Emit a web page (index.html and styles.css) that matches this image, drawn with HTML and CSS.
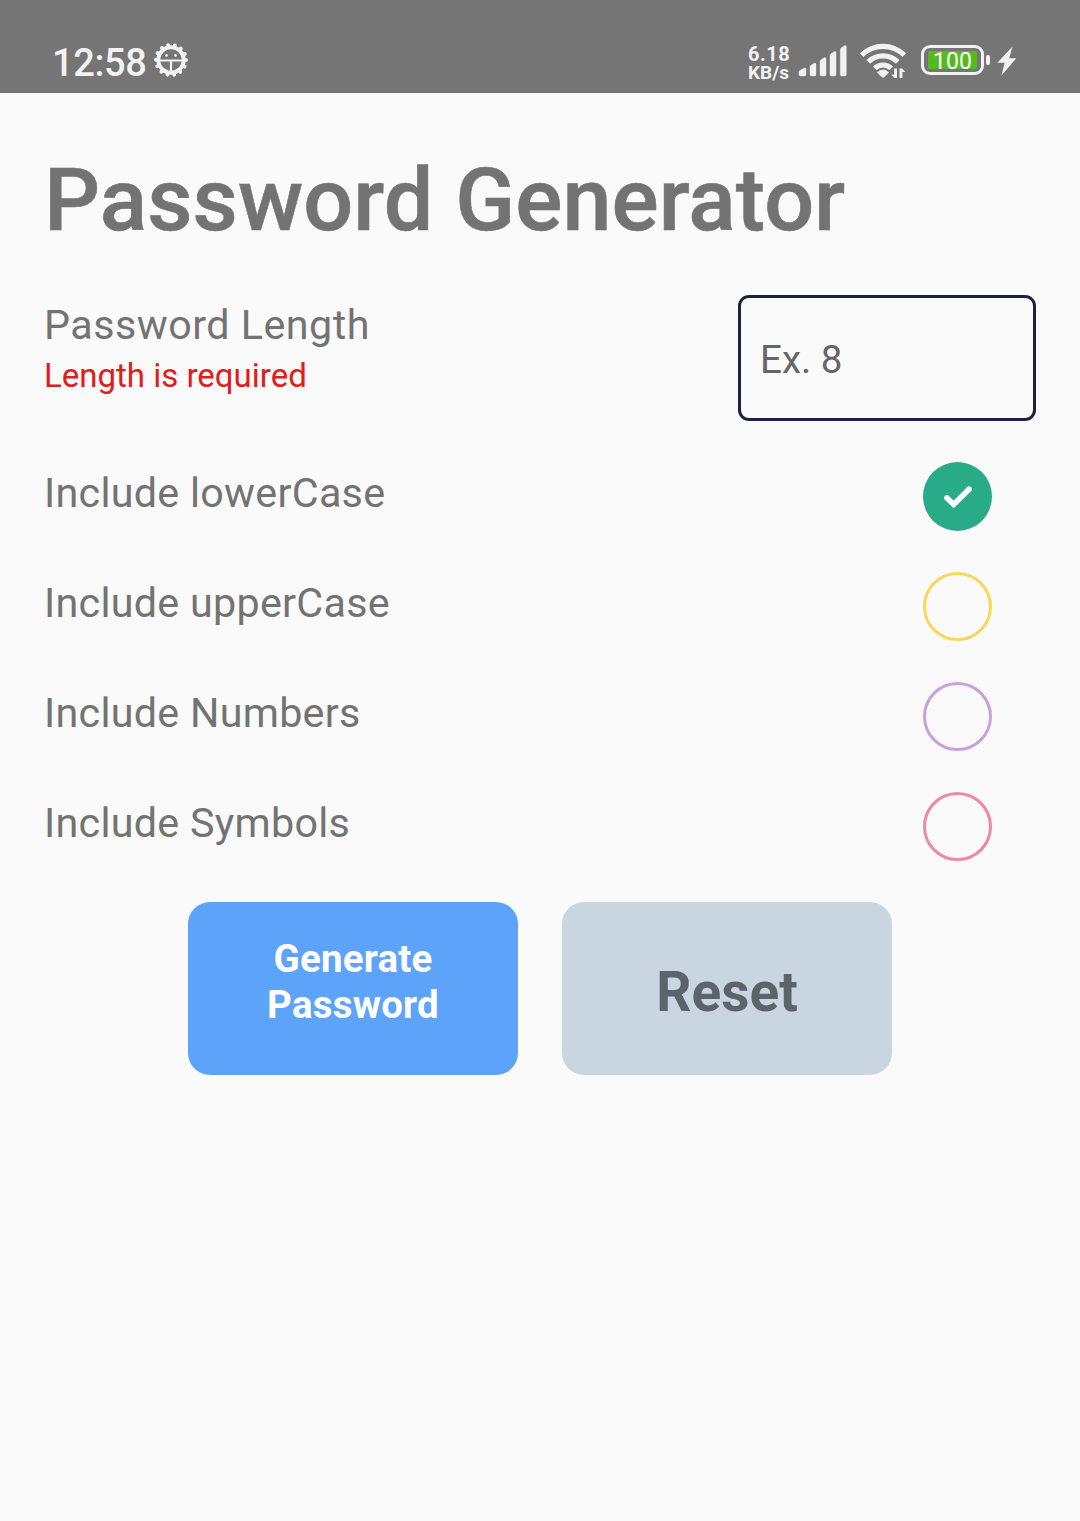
FILE: index.html
```html
<!DOCTYPE html>
<html lang="en">
<head>
<meta charset="utf-8">
<title>Password Generator</title>
<link rel="stylesheet" href="styles.css">
</head>
<body>
<header class="status">
  <div class="status-left">
    <span class="clock">12:58</span>
    <svg class="gear" width="36" height="36" viewBox="0 0 36 36">
      <circle cx="18" cy="18" r="15" fill="none" stroke="#f2f2f2" stroke-width="4" stroke-linecap="round" stroke-dasharray=".01 6.722"/>
      <circle cx="18" cy="18" r="12.700" fill="none" stroke="#f2f2f2" stroke-width="4"/>
      <path d="M6 18.500h24M18 18.500v11.500" fill="none" stroke="#f2f2f2" stroke-width="2.200"/>
      <circle cx="13.500" cy="13.400" r="1.300" fill="#f2f2f2"/><circle cx="22.500" cy="13.400" r="1.300" fill="#f2f2f2"/>
    </svg>
  </div>
  <div class="status-right">
    <div class="speed"><span>6.18</span><span class="unit">KB/s</span></div>
    <svg class="signal" width="48" height="32" viewBox="0 0 48 32" fill="#f2f2f2" stroke="#f2f2f2" stroke-width=".4">
      <path d="M0 27q0-1.200 1.200-1.800L5 23.300q2-.8 2 1V29.500q0 1.500-1.500 1.500h-4Q0 31 0 29.500z"/>
      <path d="M11 22q0-1.200 1-1.800l3.300-1.900q1.700-.8 1.700 1V29.500q0 1.500-1.500 1.500h-3Q11 31 11 29.500z"/>
      <path d="M21 16.500q0-1.200 1-1.800l3.300-1.900q1.700-.8 1.700 1V29.500q0 1.500-1.500 1.500h-3Q21 31 21 29.500z"/>
      <path d="M31 10.500q0-1.200 1-1.800l3.300-2q1.700-.8 1.700 1V29.500q0 1.500-1.500 1.500h-3Q31 31 31 29.500z"/>
      <path d="M41.300 4.500q0-1.200 1-1.800l3.300-2q1.700-.8 1.700 1V29.500q0 1.500-1.500 1.500h-3Q41.300 31 41.300 29.500z"/>
    </svg>
    <svg class="wifi" width="48" height="36" viewBox="0 0 48 36">
      <g fill="none" stroke="#f2f2f2" stroke-width="5.200">
        <path d="M1.700 12.200A30 30 0 0 1 44.300 12.200"/>
        <path d="M8.300 18.800A21 21 0 0 1 37.700 18.800"/>
        <path d="M14.800 25.300A11.800 11.800 0 0 1 31.200 25.300"/>
      </g>
      <path d="M17 29.600Q23 23.600 29 29.600L24.300 34Q23 35.100 21.700 34z" fill="#f2f2f2"/>
      <path d="M37 25.500v9.500h-2.600l-3-3.600h2.800v-5.900zM39.500 35v-9.500h2.600l3.200 3.600h-2.900V35z" fill="#f2f2f2"/>
    </svg>
    <div class="battery"><div class="charge">100</div></div>
    <div class="terminal"></div>
    <svg class="bolt" width="20" height="30" viewBox="0 0 20 30"><path d="M15.500.5L.4 16.800h7.200L4.500 29.500 19.300 12.200h-7.100z" fill="#f2f2f2"/></svg>
  </div>
</header>
<main class="app">
  <h1 class="title">Password Generator</h1>
  <form class="form">
    <div class="row length-row">
      <div class="length-text">
        <label class="label" for="length">Password Length</label>
        <span class="error">Length is required</span>
      </div>
      <input class="input" id="length" type="text" placeholder="Ex. 8">
    </div>
    <div class="row option"><span class="label">Include lowerCase</span>
      <span class="check checked"><svg width="69" height="69" viewBox="0 0 69 69"><path d="M23.900 35.900l6.800 6.500L46 27.300" fill="none" stroke="#fff" stroke-width="5.600" stroke-linecap="round"/></svg></span></div>
    <div class="row option"><span class="label">Include upperCase</span><span class="check yellow"></span></div>
    <div class="row option"><span class="label">Include Numbers</span><span class="check purple"></span></div>
    <div class="row option"><span class="label">Include Symbols</span><span class="check pink"></span></div>
    <div class="actions">
      <button class="button primary" type="button">Generate<br>Password</button>
      <button class="button secondary" type="button">Reset</button>
    </div>
  </form>
</main>
</body>
</html>
```
FILE: styles.css
```css
* { box-sizing: border-box; }
body { margin: 0; min-height: 1521px; background: #fafafa; color: #737373; font-family: Roboto, sans-serif; }
.status { height: 93px; background: #757575; color: #f2f2f2; display: flex; justify-content: space-between; padding: 42px 63px 0 52px; }
.status-left, .status-right { display: flex; align-items: flex-start; }
.clock { font-size: 38px; line-height: 42px; font-weight: 500; letter-spacing: -.4px; }
.gear { margin: 0 0 0 7px; }
.speed { display: flex; flex-direction: column; width: 51px; padding-top: 3px; font-size: 20px; line-height: 18px; font-weight: 700; letter-spacing: .5px; }
.unit { font-size: 19px; line-height: 19px; letter-spacing: 0; }
.signal { margin: 3px 13px 0 0; overflow: visible; }
.wifi { margin: 1px 13px 0 0; }
.battery { width: 63px; height: 30px; margin-top: 3px; padding: 4px; border: 3px solid #f2f2f2; border-radius: 9px; }
.charge { height: 18px; margin-top: -1px; border-radius: 2px; background: #57b91e; color: #fff; font-size: 23px; line-height: 22px; text-align: center; }
.terminal { width: 4px; height: 10px; margin: 13px 7px 0 2px; border-radius: 2px; background: #f2f2f2; }
.bolt { margin-top: 4px; }
.app { padding: 55px 44px 0; }
.title { margin: 0; font-size: 88px; line-height: 103px; font-weight: 500; letter-spacing: .06px; -webkit-text-stroke: .6px; }
.form { padding-top: 44px; }
.row { display: flex; justify-content: space-between; }
.length-row { height: 126px; }
.length-text { display: flex; flex-direction: column; padding-top: 6px; }
.label { font-size: 41.25px; line-height: 49px; letter-spacing: .28px; }
.length-text .label { letter-spacing: .48px; }
.error { font-size: 33px; line-height: 40px; margin-top: 6px; color: #e21b1b; }
.input { width: 298px; height: 126px; padding: 2px 19px 0; border: 3px solid #172340; border-radius: 11px; background: transparent; font: 38.5px Roboto, sans-serif; }
.input::placeholder { color: #666; opacity: 1; }
.option { height: 69px; margin-top: 41px; padding-right: 44px; }
.option .label { padding-top: 7px; }
.check { width: 69px; height: 69px; border: 3px solid; border-radius: 50%; }
.checked { border: 0; background: #29ab87; }
.checked svg { display: block; }
.yellow { color: #f9d75d; }
.purple { color: #c9a0dc; }
.pink { color: #ee88a8; }
.actions { display: flex; justify-content: center; gap: 44px; margin-top: 41px; }
.button { width: 330px; height: 173px; border: 0; border-radius: 22px; font: 700 38.5px/46px Roboto, sans-serif; }
.primary { padding: 0 0 14px; background: #5da3fa; color: #fff; letter-spacing: .2px; }
.secondary { padding: 7px 0 0; background: #cad5e2; color: #5d636a; font-size: 55px; line-height: 64px; }
```
